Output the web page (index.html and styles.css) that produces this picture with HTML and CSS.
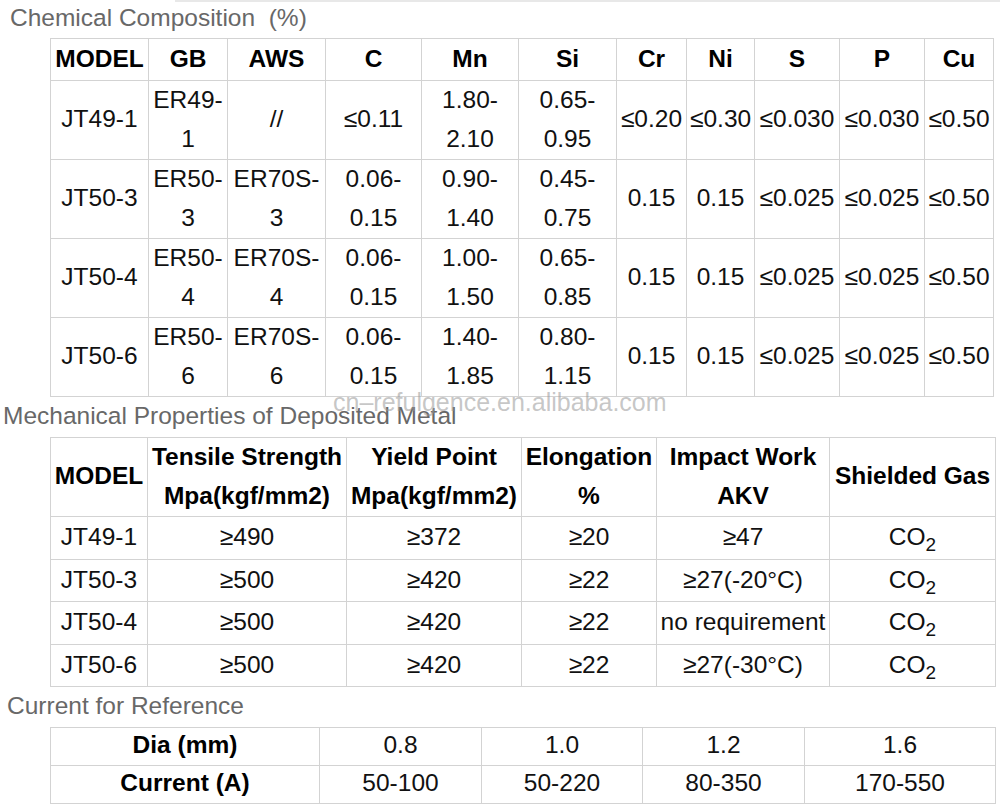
FILE: index.html
```html
<!DOCTYPE html>
<html lang="en">
<head>
<meta charset="utf-8">
<title>Welding Wire Specifications</title>
<link rel="stylesheet" href="styles.css">
</head>
<body>
<main class="page">
  <div class="topline"></div>
  <h2 class="title title-chem">Chemical Composition&nbsp; (%)</h2>
  <table class="grid chem">
    <colgroup>
      <col class="w98"><col class="w79"><col class="w98"><col class="w96"><col class="w97"><col class="w98"><col class="w70"><col class="w68"><col class="w85"><col class="w85"><col class="w69">
    </colgroup>
    <thead>
      <tr><th>MODEL</th><th>GB</th><th>AWS</th><th>C</th><th>Mn</th><th>Si</th><th>Cr</th><th>Ni</th><th>S</th><th>P</th><th>Cu</th></tr>
    </thead>
    <tbody>
      <tr><td>JT49-1</td><td>ER49-1</td><td>//</td><td>≤0.11</td><td>1.80-2.10</td><td>0.65-0.95</td><td>≤0.20</td><td>≤0.30</td><td>≤0.030</td><td>≤0.030</td><td>≤0.50</td></tr>
      <tr><td>JT50-3</td><td>ER50-3</td><td>ER70S-3</td><td>0.06-0.15</td><td>0.90-1.40</td><td>0.45-0.75</td><td>0.15</td><td>0.15</td><td>≤0.025</td><td>≤0.025</td><td>≤0.50</td></tr>
      <tr><td>JT50-4</td><td>ER50-4</td><td>ER70S-4</td><td>0.06-0.15</td><td>1.00-1.50</td><td>0.65-0.85</td><td>0.15</td><td>0.15</td><td>≤0.025</td><td>≤0.025</td><td>≤0.50</td></tr>
      <tr><td>JT50-6</td><td>ER50-6</td><td>ER70S-6</td><td>0.06-0.15</td><td>1.40-1.85</td><td>0.80-1.15</td><td>0.15</td><td>0.15</td><td>≤0.025</td><td>≤0.025</td><td>≤0.50</td></tr>
    </tbody>
  </table>

  <div class="section-head">
    <h2 class="title title-mech">Mechanical Properties of Deposited Metal</h2>
    <span class="watermark">cn–refulgence.en.alibaba.com</span>
  </div>
  <table class="grid mech">
    <colgroup>
      <col class="w97"><col class="w199"><col class="w175"><col class="w135"><col class="w173"><col class="w166">
    </colgroup>
    <thead>
      <tr><th>MODEL</th><th>Tensile Strength<br>Mpa(kgf/mm2)</th><th>Yield Point<br>Mpa(kgf/mm2)</th><th>Elongation<br>%</th><th>Impact Work<br>AKV</th><th>Shielded Gas</th></tr>
    </thead>
    <tbody>
      <tr><td>JT49-1</td><td>≥490</td><td>≥372</td><td>≥20</td><td>≥47</td><td>CO<sub>2</sub></td></tr>
      <tr><td>JT50-3</td><td>≥500</td><td>≥420</td><td>≥22</td><td>≥27(-20°C)</td><td>CO<sub>2</sub></td></tr>
      <tr><td>JT50-4</td><td>≥500</td><td>≥420</td><td>≥22</td><td>no requirement</td><td>CO<sub>2</sub></td></tr>
      <tr><td>JT50-6</td><td>≥500</td><td>≥420</td><td>≥22</td><td>≥27(-30°C)</td><td>CO<sub>2</sub></td></tr>
    </tbody>
  </table>

  <h2 class="title title-cur">Current for Reference</h2>
  <table class="grid cur">
    <colgroup>
      <col class="w269"><col class="w162"><col class="w161"><col class="w162"><col class="w191">
    </colgroup>
    <tbody>
      <tr><th>Dia (mm)</th><td>0.8</td><td>1.0</td><td>1.2</td><td>1.6</td></tr>
      <tr><th>Current (A)</th><td>50-100</td><td>50-220</td><td>80-350</td><td>170-550</td></tr>
    </tbody>
  </table>
</main>
</body>
</html>
```

FILE: styles.css
```css
html, body {
  margin: 0;
  padding: 0;
  background: #ffffff;
}

body {
  font-family: "Liberation Sans", Arial, sans-serif;
  font-size: 24.5px;
  color: #111111;
}

.page {
  position: relative;
  width: 1000px;
}

.topline {
  position: absolute;
  top: 0;
  left: 175px;
  right: 0;
  height: 2px;
  background: #e8e8e8;
}

.title {
  margin: 0;
  font-size: 24.5px;
  font-weight: normal;
  color: #686868;
  white-space: nowrap;
  line-height: 36px;
  padding-bottom: 2px;
}

.title-chem {
  padding-left: 10px;
}

.title-mech {
  line-height: 38px;
  padding-left: 3px;
}

.title-cur {
  line-height: 38px;
  padding-left: 7px;
}

.section-head {
  position: relative;
}

.watermark {
  position: absolute;
  left: 333px;
  top: -7px;
  font-size: 25px;
  line-height: 25px;
  color: rgba(150, 150, 150, 0.55);
  white-space: nowrap;
  pointer-events: none;
}

.grid {
  border-collapse: collapse;
  table-layout: fixed;
  margin-left: 50px;
}

.grid th,
.grid td {
  border: 1px solid #d3d3d3;
  text-align: center;
  vertical-align: middle;
  padding: 0 3px;
  line-height: 39px;
}

.grid th {
  font-weight: bold;
  color: #000000;
}

.grid td {
  color: #111111;
}

.chem { width: 943px; }
.mech { width: 945px; }
.cur  { width: 945px; }

.chem th {
  padding: 0 3px 2px;
}

.chem td {
  padding: 0 3px 1px;
  line-height: 38.5px;
}

.mech th {
  padding: 0 3px 1px;
  line-height: 38.5px;
}

.mech td {
  padding: 0 3px 2px;
  line-height: 39.5px;
}

.cur th,
.cur td {
  padding: 0 3px 3px;
  line-height: 34px;
}

.grid sub {
  font-size: 19px;
  line-height: 0;
  vertical-align: -6px;
}

.w68 { width: 68px; }
.w69 { width: 69px; }
.w70 { width: 70px; }
.w79 { width: 79px; }
.w85 { width: 85px; }
.w96 { width: 96px; }
.w97 { width: 97px; }
.w98 { width: 98px; }
.w135 { width: 135px; }
.w161 { width: 161px; }
.w162 { width: 162px; }
.w166 { width: 166px; }
.w173 { width: 173px; }
.w175 { width: 175px; }
.w191 { width: 191px; }
.w199 { width: 199px; }
.w269 { width: 269px; }
```
